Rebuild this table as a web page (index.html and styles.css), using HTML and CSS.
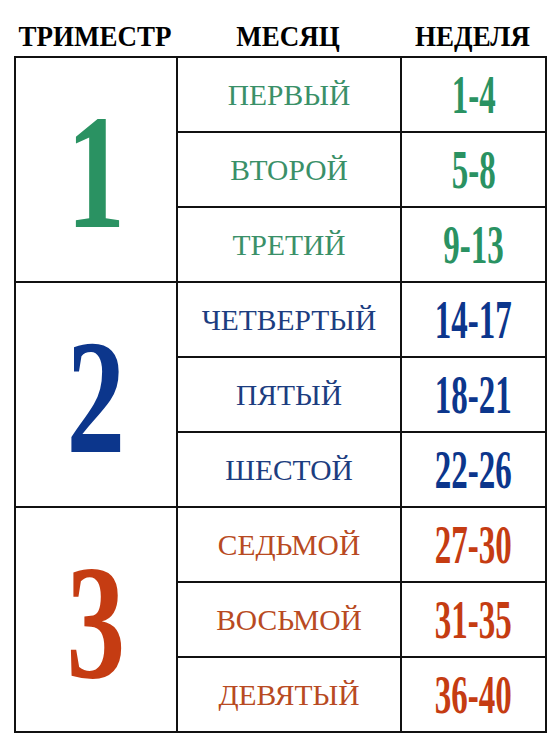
FILE: index.html
```html
<!DOCTYPE html>
<html lang="ru">
<head>
<meta charset="utf-8">
<title>Триместры</title>
<link rel="stylesheet" href="styles.css">
</head>
<body>
<div class="page">
  <div class="head">
    <div class="h h1">ТРИМЕСТР</div>
    <div class="h h2">МЕСЯЦ</div>
    <div class="h h3">НЕДЕЛЯ</div>
  </div>
  <table class="grid">
    <colgroup><col class="c1"><col class="c2"><col class="c3"></colgroup>
    <tbody class="t green">
      <tr><td class="big" rowspan="3"><span class="bn">1</span></td><td class="m">ПЕРВЫЙ</td><td class="w"><span class="wn">1-4</span></td></tr>
      <tr><td class="m">ВТОРОЙ</td><td class="w"><span class="wn">5-8</span></td></tr>
      <tr><td class="m">ТРЕТИЙ</td><td class="w"><span class="wn">9-13</span></td></tr>
    </tbody>
    <tbody class="t blue">
      <tr><td class="big" rowspan="3"><span class="bn">2</span></td><td class="m">ЧЕТВЕРТЫЙ</td><td class="w"><span class="wn">14-17</span></td></tr>
      <tr><td class="m">ПЯТЫЙ</td><td class="w"><span class="wn">18-21</span></td></tr>
      <tr><td class="m">ШЕСТОЙ</td><td class="w"><span class="wn">22-26</span></td></tr>
    </tbody>
    <tbody class="t red">
      <tr><td class="big" rowspan="3"><span class="bn">3</span></td><td class="m">СЕДЬМОЙ</td><td class="w"><span class="wn">27-30</span></td></tr>
      <tr><td class="m">ВОСЬМОЙ</td><td class="w"><span class="wn">31-35</span></td></tr>
      <tr><td class="m">ДЕВЯТЫЙ</td><td class="w"><span class="wn">36-40</span></td></tr>
    </tbody>
  </table>
</div>
</body>
</html>
```
FILE: styles.css
```css
html, body {
  margin: 0;
  padding: 0;
  background: #fff;
}
body {
  font-family: "Liberation Serif", "Times New Roman", serif;
}
.page {
  width: 558px;
  height: 744px;
  padding-left: 14px;
  box-sizing: border-box;
}
.head {
  display: grid;
  grid-template-columns: 162px 224px 145px;
  height: 56px;
  align-items: center;
}
.h {
  text-align: center;
  font-weight: bold;
  font-size: 27px;
  color: #000;
  padding-top: 14px;
  transform: scaleY(1.1);
}
.grid {
  border-collapse: collapse;
  table-layout: fixed;
  width: 531px;
}
.c1 { width: 162px; }
.c2 { width: 224px; }
.c3 { width: 145px; }
.grid td {
  border: 2px solid #111;
  height: 70px;
  padding: 0;
  text-align: center;
  vertical-align: middle;
  line-height: 1;
}
.big {
  padding-top: 6px !important;
}
.bn {
  display: inline-block;
  font-weight: bold;
  font-size: 163px;
  line-height: 1;
  transform: scaleX(0.72);
}
.m {
  font-size: 29.5px;
  padding-top: 3px !important;
}
.wn {
  display: inline-block;
  font-weight: bold;
  font-size: 55px;
  line-height: 1;
  transform: scaleX(0.6);
  white-space: nowrap;
}
.green .bn, .green .wn { color: #2a9262; }
.green .m { color: #3a9068; }
.blue .bn, .blue .wn { color: #0c368c; }
.blue .m { color: #1c3d80; }
.red .bn, .red .wn { color: #c53c12; }
.red .m { color: #b84a22; }
```
